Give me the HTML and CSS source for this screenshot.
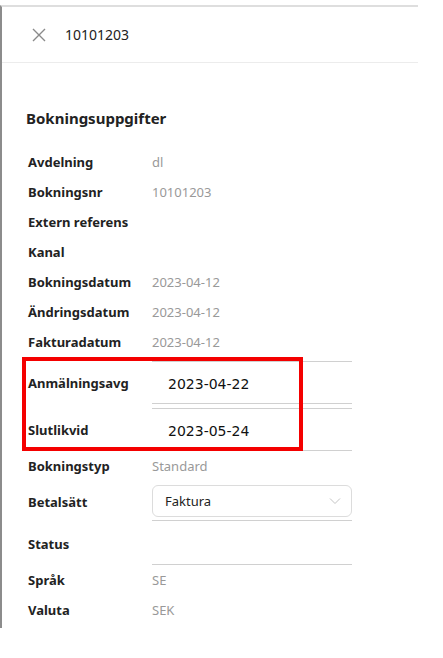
FILE: index.html
```html
<!DOCTYPE html>
<html>
    <head>
        <title>Bokning 10101203</title>
        <link rel="stylesheet" href="styles.css">
    </head>
    <body>
        <div class="panel">
            <div class="panel-head">
                <span class="close">
                    <svg width="14" height="14" viewBox="0 0 14 14">
                        <path d="M1 1L13 13M13 1L1 13" stroke="#8a8a8a" stroke-width="1.4" fill="none"/>
                    </svg>
                </span>
                <span class="head-title">10101203</span>
            </div>

            <div class="panel-body">
                <h3 class="section-title">Bokningsuppgifter</h3>

                <div class="row"><div class="label">Avdelning</div><div class="value">dl</div></div>
                <div class="row"><div class="label">Bokningsnr</div><div class="value">10101203</div></div>
                <div class="row"><div class="label">Extern referens</div><div class="value"></div></div>
                <div class="row"><div class="label">Kanal</div><div class="value"></div></div>
                <div class="row"><div class="label">Bokningsdatum</div><div class="value">2023-04-12</div></div>
                <div class="row"><div class="label">Ändringsdatum</div><div class="value">2023-04-12</div></div>
                <div class="row"><div class="label">Fakturadatum</div><div class="value">2023-04-12</div></div>

                <div class="dates">
                    <div class="row row-input"><div class="label">Anmälningsavg</div><div class="date-field">2023-04-22</div></div>
                    <div class="row row-input"><div class="label">Slutlikvid</div><div class="date-field">2023-05-24</div></div>
                    <div class="mark"></div>
                </div>

                <div class="row"><div class="label">Bokningstyp</div><div class="value">Standard</div></div>
                <div class="row row-select">
                    <div class="label">Betalsätt</div>
                    <div class="select-wrap">
                        <div class="select">
                            <span>Faktura</span>
                            <svg width="12" height="8" viewBox="0 0 12 8">
                                <path d="M1 1.5L6 6.5L11 1.5" stroke="#c4c4c4" stroke-width="1" fill="none"/>
                            </svg>
                        </div>
                    </div>
                </div>
                <div class="row row-status"><div class="label">Status</div><div class="status-field"></div></div>
                <div class="row"><div class="label">Språk</div><div class="value">SE</div></div>
                <div class="row"><div class="label">Valuta</div><div class="value">SEK</div></div>
            </div>
        </div>
    </body>
</html>
```

FILE: styles.css
```css
body{
    margin:0;
    background:#fff;
    font-family:"Noto Sans", "Open Sans", sans-serif;
    color:#222;
}
.panel{
    width:418px;
    margin-top:5px;
    height:623px;
    border-top:2px solid #dedede;
    border-left:2px solid #8c8c8c;
    box-sizing:border-box;
}
.panel-head{
    height:56px;
    border-bottom:1px solid #ececec;
    display:flex;
    align-items:center;
    padding-left:30px;
    box-sizing:border-box;
}
.close{
    display:flex;
    width:14px;
    height:14px;
    margin-right:19px;
}
.head-title{
    font-size:14px;
    color:#222;
}
.panel-body{
    padding:43px 0 0 24px;
}
.section-title{
    margin:0 0 17px 0;
    font-size:15px;
    font-weight:bold;
    line-height:24px;
}
.row{
    display:grid;
    grid-template-columns:124px 200px;
    align-items:center;
    height:30px;
    padding-left:2px;
}
.label{
    font-size:13px;
    font-weight:bold;
    color:#222;
}
.value{
    font-size:13px;
    color:#999;
}
.dates{
    position:relative;
}
.row-input{
    height:47px;
}
.row-input .label{
    padding-top:4px;
}
.date-field{
    height:43px;
    margin-top:3px;
    border-top:1px solid #d0d0d0;
    border-bottom:1px solid #d0d0d0;
    box-sizing:border-box;
    padding:3px 0 0 16px;
    display:flex;
    align-items:center;
    font-family:"DejaVu Sans", sans-serif;
    font-size:14px;
    color:#111;
}
.mark{
    position:absolute;
    left:-4px;
    top:0;
    width:281px;
    height:94px;
    border:4px solid #f40000;
    box-sizing:border-box;
}
.row-select{
    height:42px;
    align-items:start;
}
.select-wrap{
    padding-top:4px;
    border-bottom:1px solid #d0d0d0;
    padding-bottom:3px;
}
.select{
    height:32px;
    border:1px solid #dcdcdc;
    border-radius:6px;
    box-sizing:border-box;
    display:flex;
    align-items:center;
    justify-content:space-between;
    padding:0 10px 0 12px;
    font-size:13px;
    color:#222;
}
.row-select .label{
    padding-top:12px;
}
.row-status{
    height:42px;
}
.status-field{
    height:42px;
    border-bottom:1px solid #d0d0d0;
    box-sizing:border-box;
}
```
